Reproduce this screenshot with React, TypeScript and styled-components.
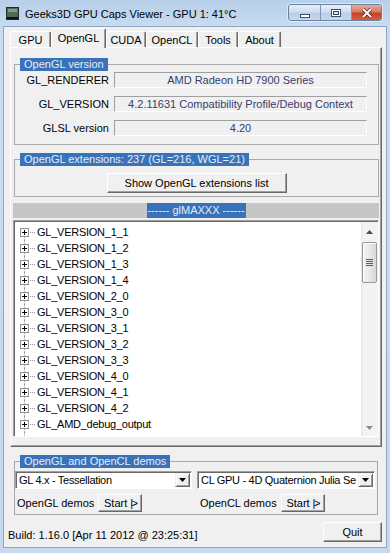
import React from 'react';
import styled, { createGlobalStyle } from 'styled-components';

const GlobalStyle = createGlobalStyle`
  html, body {
    margin: 0;
    padding: 0;
    background: #fff;
  }
  body {
    font-family: "Liberation Sans", Arial, sans-serif;
    font-size: 11px;
    color: #000;
  }
  * {
    box-sizing: border-box;
  }
`;

const Window = styled.div`
  width: 390px;
  height: 553px;
  display: flex;
  flex-direction: column;
  padding: 0 3px 5px;
  background: linear-gradient(180deg, #b7cfe9 0, #c8dbf0 26px, #c6d9ee 100%);
  overflow: hidden;
`;

const TitleBar = styled.div`
  height: 26px;
  display: flex;
  align-items: center;
  padding-left: 3px;
`;

const AppIcon = styled.svg`
  flex: none;
  margin-right: 6px;
  margin-top: 1px;
`;

const TitleText = styled.span`
  font-size: 11px;
  color: #000;
  white-space: nowrap;
  margin-top: 1px;
`;

const CaptionButtons = styled.div`
  display: flex;
  margin: 0 5px 0 auto;
  align-self: flex-start;
  margin-top: 4px;
  height: 17px;
  border: 1px solid #6a82a2;
  border-radius: 3px;
  overflow: hidden;
  box-shadow: 0 0 0 1px rgba(255, 255, 255, 0.5);
`;

const CaptionButton = styled.div<{ $w: number; $close?: boolean }>`
  width: ${p => p.$w}px;
  display: flex;
  align-items: center;
  justify-content: center;
  background: ${p =>
    p.$close
      ? 'linear-gradient(180deg, #e9a99b 0, #d77b65 45%, #c4432a 55%, #d65e3f 100%)'
      : 'linear-gradient(180deg, #e6eef8 0, #d0deef 45%, #b9cde6 55%, #c8d9ee 100%)'};
  & + & {
    border-left: 1px solid #7d93b0;
  }
`;

const Client = styled.div`
  flex: 1;
  display: flex;
  flex-direction: column;
  background: #f0f0f0;
  border: 1px solid #8ea6c2;
`;

const TabRow = styled.div`
  display: flex;
  align-items: flex-end;
  height: 20px;
  margin-left: 6px;
  position: relative;
  z-index: 1;
`;

const Tab = styled.div<{ $w: number; $active?: boolean }>`
  width: ${p => p.$w}px;
  height: ${p => (p.$active ? 20 : 16)}px;
  margin-bottom: ${p => (p.$active ? -1 : 0)}px;
  display: flex;
  align-items: center;
  justify-content: center;
  background: #f0f0f0;
  border-top: 1px solid #fff;
  border-left: 1px solid #fff;
  border-right: 1px solid #696969;
  border-radius: 2px 2px 0 0;
  box-shadow: inset -1px 0 0 #a0a0a0;
  white-space: nowrap;
  padding-bottom: ${p => (p.$active ? 2 : 0)}px;
`;

const TabPanel = styled.div`
  display: flex;
  flex-direction: column;
  margin: 0 4px 0 6px;
  padding: 0 2px 9px 3px;
  border: 1px solid;
  border-color: #fff #696969 #696969 #fff;
  box-shadow: inset -1px -1px 0 #a0a0a0;
`;

const Group = styled.fieldset<{ $top: number }>`
  margin: ${p => p.$top}px 0 0 0;
  padding: 0;
  border: 1px solid #a9a9a9;
  min-width: 0;
`;

const GroupTitle = styled.legend`
  margin-left: 5px;
  padding: 0 4px;
  line-height: 13px;
  background: #3873b9;
  color: #e4ecf8;
  white-space: nowrap;
`;

const InfoGrid = styled.div`
  display: grid;
  grid-template-columns: 94px 253px;
  column-gap: 5px;
  row-gap: 8px;
  padding: 1px 10px 8px 0;
`;

const InfoLabel = styled.div`
  text-align: right;
  line-height: 16px;
  white-space: nowrap;
`;

const InfoValue = styled.div`
  height: 16px;
  line-height: 14px;
  text-align: center;
  color: #33406f;
  background: #f0f0f0;
  border: 1px solid;
  border-color: #a0a0a0 #fff #fff #a0a0a0;
  white-space: nowrap;
  overflow: hidden;
`;

const ButtonArea = styled.div`
  display: flex;
  justify-content: center;
  padding: 7px 0 3px;
`;

const Button = styled.button<{ $w: number; $h: number }>`
  width: ${p => p.$w}px;
  height: ${p => p.$h}px;
  flex: none;
  padding: 0;
  font-family: inherit;
  font-size: 11px;
  color: #000;
  background: #f0f0f0;
  border: 1px solid;
  border-color: #fff #696969 #696969 #fff;
  box-shadow: inset -1px -1px 0 #a0a0a0;
  white-space: nowrap;
`;

const PlayMark = styled.span`
  letter-spacing: -1.5px;
  margin-left: 3px;
`;

const MaxBar = styled.div`
  display: flex;
  justify-content: center;
  height: 15px;
  margin: 6px 0 0 -1px;
  background: #c6c6c6;
`;

const MaxLabel = styled.div`
  width: 99px;
  line-height: 15px;
  text-align: center;
  background: #3873b9;
  color: #e4ecf8;
  white-space: nowrap;
`;

const Tree = styled.div`
  display: flex;
  height: 217px;
  margin: 2px 0 0 -1px;
  background: #fff;
  border: 1px solid;
  border-color: #a0a0a0 #fff #fff #a0a0a0;
  box-shadow: inset 1px 1px 0 #696969;
`;

const TreeList = styled.div`
  flex: 1;
  overflow: hidden;
  padding-top: 3px;
`;

const TreeRow = styled.div<{ $first?: boolean }>`
  position: relative;
  display: flex;
  align-items: center;
  height: 16px;
  padding-left: 6px;
  white-space: nowrap;
  letter-spacing: -0.25px;
  &::before {
    content: '';
    position: absolute;
    left: 10px;
    top: ${p => (p.$first ? 8 : 0)}px;
    bottom: 0;
    border-left: 1px dotted #a0a0a0;
  }
`;

const Expander = styled.span`
  position: relative;
  z-index: 1;
  width: 9px;
  height: 9px;
  flex: none;
  display: flex;
  align-items: center;
  justify-content: center;
  background: #fff;
  border: 1px solid #919191;
`;

const Branch = styled.span`
  width: 5px;
  margin: 0 2px 0 1px;
  border-top: 1px dotted #a0a0a0;
`;

const Scrollbar = styled.div`
  width: 17px;
  margin-top: 1px;
  display: flex;
  flex-direction: column;
  background: linear-gradient(90deg, #e3e3e3 0, #f3f3f3 2px, #f3f3f3 100%);
`;

const ArrowCell = styled.div<{ $h: number }>`
  height: ${p => p.$h}px;
  display: flex;
  align-items: center;
  justify-content: center;
`;

const Track = styled.div`
  flex: 1;
  padding: 0 1px;
`;

const Thumb = styled.div`
  height: 41px;
  display: flex;
  align-items: center;
  justify-content: center;
  border: 1px solid #979797;
  border-radius: 2px;
  background: linear-gradient(90deg, #f3f3f3 0, #e8e8e8 50%, #d8d8d8 100%);
  box-shadow: inset 1px 1px 0 #fff;
`;

const DemoGroup = styled.fieldset`
  margin: 8px 8px 0 10px;
  padding: 3px 2px 2px 0;
  border: 1px solid #a9a9a9;
  min-width: 0;
`;

const DemoGrid = styled.div`
  display: grid;
  grid-template-columns: 177px 178px;
  column-gap: 5px;
  row-gap: 5px;
`;

const Combo = styled.div`
  height: 18px;
  display: flex;
  align-items: center;
  padding: 1px 1px 1px 3px;
  background: #fff;
  border: 1px solid;
  border-color: #a0a0a0 #fff #fff #a0a0a0;
  box-shadow: inset 1px 1px 0 #696969;
`;

const ComboText = styled.span`
  flex: 1;
  min-width: 0;
  overflow: hidden;
  white-space: nowrap;
  font-size: 11px;
  letter-spacing: -0.3px;
`;

const ComboButton = styled.div`
  width: 15px;
  height: 14px;
  flex: none;
  display: flex;
  align-items: center;
  justify-content: center;
  background: #f0f0f0;
  border: 1px solid;
  border-color: #f0f0f0 #696969 #696969 #f0f0f0;
  box-shadow: inset 1px 1px 0 #fff, inset -1px -1px 0 #a0a0a0;
`;

const DemoCell = styled.div<{ $pad: number }>`
  display: flex;
  align-items: center;
  gap: 4px;
  padding-left: ${p => p.$pad}px;
  white-space: nowrap;
`;

const Footer = styled.div`
  display: flex;
  justify-content: space-between;
  align-items: flex-end;
  margin: 7px 4px 0 4px;
`;

const BuildText = styled.span`
  line-height: 14px;
  white-space: nowrap;
`;

const tabs = [
  { label: 'GPU', w: 41 },
  { label: 'OpenGL', w: 55, active: true },
  { label: 'CUDA', w: 40 },
  { label: 'OpenCL', w: 52 },
  { label: 'Tools', w: 40 },
  { label: 'About', w: 43 },
];

const glInfo = [
  { label: 'GL_RENDERER', value: 'AMD Radeon HD 7900 Series' },
  { label: 'GL_VERSION', value: '4.2.11631 Compatibility Profile/Debug Context' },
  { label: 'GLSL version', value: '4.20' },
];

const extensions = [
  'GL_VERSION_1_1',
  'GL_VERSION_1_2',
  'GL_VERSION_1_3',
  'GL_VERSION_1_4',
  'GL_VERSION_2_0',
  'GL_VERSION_3_0',
  'GL_VERSION_3_1',
  'GL_VERSION_3_2',
  'GL_VERSION_3_3',
  'GL_VERSION_4_0',
  'GL_VERSION_4_1',
  'GL_VERSION_4_2',
  'GL_AMD_debug_output',
];

const Plus = () => (
  <svg width="5" height="5" viewBox="0 0 5 5">
    <rect x="0" y="2" width="5" height="1" fill="#000" />
    <rect x="2" y="0" width="1" height="5" fill="#000" />
  </svg>
);

const Arrow = ({ up }: { up?: boolean }) => (
  <svg width="7" height="4" viewBox="0 0 7 4">
    <path d={up ? 'M0 4L3.5 0L7 4Z' : 'M0 0L3.5 4L7 0Z'} fill={up ? '#4a4a4a' : '#8a8a8a'} />
  </svg>
);

const ComboArrow = () => (
  <svg width="7" height="4" viewBox="0 0 7 4">
    <path d="M0 0L3.5 4L7 0Z" fill="#000" />
  </svg>
);

const Grip = () => (
  <svg width="7" height="8" viewBox="0 0 7 8">
    {[0, 2, 4, 6].map(y => (
      <rect key={y} x="0" y={y} width="7" height="1" fill="#5c5c5c" />
    ))}
  </svg>
);

const App: React.FC = () => {
  return (
    <>
      <GlobalStyle />
      <Window>
        <TitleBar>
          <AppIcon width="13" height="13" viewBox="0 0 13 13">
            <rect x="0" y="0" width="13" height="13" fill="#1f2a22" />
            <rect x="1" y="1" width="11" height="9" fill="#4e6b55" />
            <rect x="2" y="2" width="9" height="3" fill="#7f9e86" />
            <rect x="1" y="10" width="11" height="2" fill="#0e1510" />
          </AppIcon>
          <TitleText>Geeks3D GPU Caps Viewer - GPU 1: 41°C</TitleText>
          <CaptionButtons>
            <CaptionButton $w={31}>
              <svg width="10" height="4" viewBox="0 0 10 4" style={{ marginTop: 6 }}>
                <rect x="0.5" y="0.5" width="9" height="3" fill="#fff" stroke="#3b4f6b" />
              </svg>
            </CaptionButton>
            <CaptionButton $w={31}>
              <svg width="10" height="8" viewBox="0 0 10 8">
                <rect x="0.5" y="0.5" width="9" height="7" fill="#fff" stroke="#3b4f6b" />
                <rect x="2.5" y="2.5" width="5" height="3" fill="#d0ddee" stroke="#3b4f6b" />
              </svg>
            </CaptionButton>
            <CaptionButton $w={30} $close>
              <svg width="12" height="10" viewBox="0 0 12 10">
                <path d="M2 1L10 9M10 1L2 9" stroke="#5a1a10" strokeWidth="3.4" />
                <path d="M2 1L10 9M10 1L2 9" stroke="#fff" strokeWidth="2" />
              </svg>
            </CaptionButton>
          </CaptionButtons>
        </TitleBar>

        <Client>
          <TabRow>
            {tabs.map(t => (
              <Tab key={t.label} $w={t.w} $active={t.active}>
                {t.label}
              </Tab>
            ))}
          </TabRow>

          <TabPanel>
            <Group $top={10}>
              <GroupTitle>OpenGL version</GroupTitle>
              <InfoGrid>
                {glInfo.map(row => (
                  <React.Fragment key={row.label}>
                    <InfoLabel>{row.label}</InfoLabel>
                    <InfoValue>{row.value}</InfoValue>
                  </React.Fragment>
                ))}
              </InfoGrid>
            </Group>

            <Group $top={8}>
              <GroupTitle>OpenGL extensions: 237 (GL=216, WGL=21)</GroupTitle>
              <ButtonArea>
                <Button $w={180} $h={20}>Show OpenGL extensions list</Button>
              </ButtonArea>
            </Group>

            <MaxBar>
              <MaxLabel>------ glMAXXX ------</MaxLabel>
            </MaxBar>

            <Tree>
              <TreeList>
                {extensions.map((name, i) => (
                  <TreeRow key={name} $first={i === 0}>
                    <Expander>
                      <Plus />
                    </Expander>
                    <Branch />
                    {name}
                  </TreeRow>
                ))}
                {/* next item is scrolled out of view, only its connector shows */}
                <TreeRow />
              </TreeList>
              <Scrollbar>
                <ArrowCell $h={20}>
                  <Arrow up />
                </ArrowCell>
                <Track>
                  <Thumb>
                    <Grip />
                  </Thumb>
                </Track>
                <ArrowCell $h={17}>
                  <Arrow />
                </ArrowCell>
              </Scrollbar>
            </Tree>
          </TabPanel>

          <DemoGroup>
            <GroupTitle>OpenGL and OpenCL demos</GroupTitle>
            <DemoGrid>
              <Combo>
                <ComboText>GL 4.x - Tessellation</ComboText>
                <ComboButton>
                  <ComboArrow />
                </ComboButton>
              </Combo>
              <Combo>
                <ComboText>CL GPU - 4D Quaternion Julia Se</ComboText>
                <ComboButton>
                  <ComboArrow />
                </ComboButton>
              </Combo>
              <DemoCell $pad={2}>
                OpenGL demos
                <Button $w={44} $h={18}>
                  Start<PlayMark>|&gt;</PlayMark>
                </Button>
              </DemoCell>
              <DemoCell $pad={3}>
                OpenCL demos
                <Button $w={44} $h={18}>
                  Start<PlayMark>|&gt;</PlayMark>
                </Button>
              </DemoCell>
            </DemoGrid>
          </DemoGroup>

          <Footer>
            <BuildText>Build: 1.16.0 [Apr 11 2012 @ 23:25:31]</BuildText>
            <Button $w={59} $h={20}>Quit</Button>
          </Footer>
        </Client>
      </Window>
    </>
  );
};

export default App;
